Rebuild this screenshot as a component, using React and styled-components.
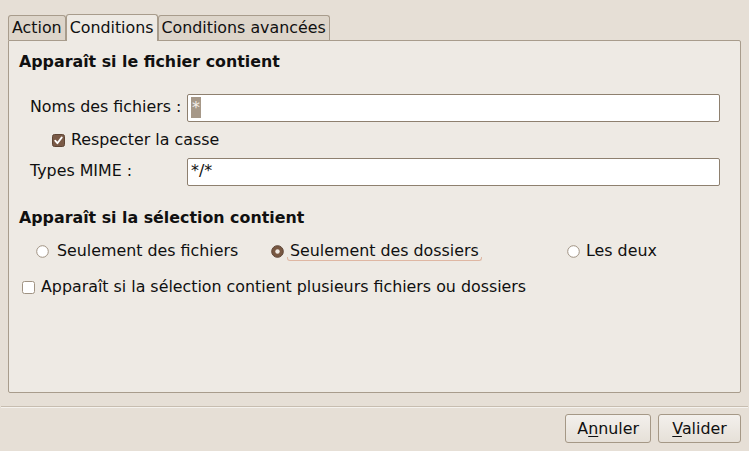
import React from 'react';
import styled, { createGlobalStyle } from 'styled-components';

const GlobalStyle = createGlobalStyle`
  body {
    margin: 0;
    background: #e6dfd6;
    font-family: 'DejaVu Sans', 'Liberation Sans', sans-serif;
    font-size: 15.85px;
    line-height: 20px;
    color: #101010;
  }
`;

const Root = styled.div`
  height: 451px;
  display: flex;
  flex-direction: column;
  overflow: hidden;
`;

const Notebook = styled.div`
  flex: 1;
  display: flex;
  flex-direction: column;
  margin: 14px 8px 0 8px;
`;

const TabBar = styled.div`
  display: flex;
  align-items: flex-end;
  height: 26px;
`;

const Tab = styled.div`
  position: relative;
  z-index: ${({ active }) => (active ? 2 : 1)};
  box-sizing: border-box;
  height: ${({ active }) => (active ? 27 : 25)}px;
  margin-bottom: ${({ active }) => (active ? -1 : 0)}px;
  padding: 0 3px ${({ active }) => (active ? 1 : 0)}px;
  display: flex;
  align-items: center;
  border: 1px solid #a89c8c;
  border-bottom: none;
  border-radius: 3px 3px 0 0;
  background: ${({ active }) => (active ? '#eeeae4' : '#ddd5ca')};
  white-space: nowrap;
`;

const Panel = styled.div`
  flex: 1;
  border: 1px solid #a89c8c;
  border-radius: 0 2px 2px 2px;
  background: #eeeae4;
  padding: 11px 20px 0 10px;
`;

const Heading = styled.div`
  font-weight: bold;
  margin-top: ${({ gap }) => gap || 0}px;
`;

const FieldGrid = styled.div`
  display: grid;
  grid-template-columns: 157px 1fr;
  align-items: center;
  margin: 22px 0 0 11px;
`;

const Label = styled.div`
  padding-bottom: 2px;
  white-space: nowrap;
`;

const Entry = styled.div`
  box-sizing: border-box;
  height: 28px;
  margin-top: ${({ gap }) => gap || 0}px;
  display: flex;
  align-items: center;
  padding: 0 4px 2px 3px;
  border: 1px solid #8e806f;
  border-radius: 2px;
  background: #ffffff;
  white-space: pre;
`;

const Selection = styled.span`
  display: inline-block;
  height: 21px;
  line-height: 21px;
  padding: 0 1px;
  background: #a69888;
  color: #f4f0ea;
`;

const Option = styled.label`
  display: flex;
  align-items: center;
  gap: ${({ spacing }) => spacing || 7}px;
  width: ${({ width }) => (width ? `${width}px` : 'auto')};
  margin: ${({ gap }) => gap || 0}px 0 0 ${({ indent }) => indent || 0}px;
  grid-column: ${({ span }) => (span ? '1 / -1' : 'auto')};
  height: 20px;
  white-space: nowrap;

  svg {
    flex: none;
  }
`;

const RadioRow = styled.div`
  display: flex;
  margin: 13px 0 0 17px;
`;

const Focused = styled.span`
  position: relative;

  &::after {
    content: '';
    position: absolute;
    left: -3px;
    right: -3px;
    bottom: 0;
    height: 3px;
    border: 1px solid #dfb7a3;
    border-top: none;
    border-radius: 0 0 3px 3px;
  }
`;

const Separator = styled.div`
  margin: 13px 1px 0;
  height: 0;
  border-top: 1px solid #c7bdb0;
  border-bottom: 1px solid #f5f2ee;
`;

const ButtonBar = styled.div`
  display: flex;
  justify-content: flex-end;
  gap: 7px;
  padding: 6px 8px 8px;
`;

const Button = styled.button`
  box-sizing: border-box;
  height: 29px;
  min-width: 83px;
  padding: 0 11px;
  font: inherit;
  color: #101010;
  border: 1px solid #a59886;
  border-radius: 3px;
  background: linear-gradient(#f3f0ec, #e6e0d8);

  u {
    text-decoration-thickness: 1px;
    text-underline-offset: 2px;
  }
`;

const CheckBox = ({ checked }) => (
  <svg width="13" height="13" viewBox="0 0 13 13">
    <rect
      x="0.5"
      y="0.5"
      width="12"
      height="12"
      rx="2"
      fill={checked ? '#7a5a46' : '#ffffff'}
      stroke={checked ? '#5e4534' : '#a09383'}
    />
    {checked && (
      <path
        d="M3.2 6.6 L5.4 9.2 L9.8 3.4"
        fill="none"
        stroke="#ffffff"
        strokeWidth="1.8"
        strokeLinecap="round"
        strokeLinejoin="round"
      />
    )}
  </svg>
);

const Radio = ({ checked }) => (
  <svg width="13" height="13" viewBox="0 0 13 13">
    <circle
      cx="6.5"
      cy="6.5"
      r="5.8"
      fill={checked ? '#785842' : '#ffffff'}
      stroke={checked ? '#5c4333' : '#a09383'}
    />
    {checked && <circle cx="6.5" cy="6.5" r="2.2" fill="#f1ebe4" />}
  </svg>
);

export default function App() {
  return (
    <Root>
      <GlobalStyle />
      <Notebook>
        <TabBar>
          <Tab>Action</Tab>
          <Tab active>Conditions</Tab>
          <Tab>Conditions avancées</Tab>
        </TabBar>
        <Panel>
          <Heading>Apparaît si le fichier contient</Heading>
          <FieldGrid>
            <Label>Noms des fichiers :</Label>
            <Entry>
              <Selection>*</Selection>
            </Entry>
            <Option span indent={22} gap={8} spacing={6}>
              <CheckBox checked />
              Respecter la casse
            </Option>
            <Label style={{ marginTop: 8 }}>Types MIME :</Label>
            <Entry gap={8}>*/*</Entry>
          </FieldGrid>
          <Heading gap={22}>Apparaît si la sélection contient</Heading>
          <RadioRow>
            <Option width={235} spacing={8}>
              <Radio />
              Seulement des fichiers
            </Option>
            <Option width={296} spacing={6}>
              <Radio checked />
              <Focused>Seulement des dossiers</Focused>
            </Option>
            <Option spacing={6}>
              <Radio />
              Les deux
            </Option>
          </RadioRow>
          <Option indent={3} gap={16} spacing={6}>
            <CheckBox />
            Apparaît si la sélection contient plusieurs fichiers ou dossiers
          </Option>
        </Panel>
      </Notebook>
      <Separator />
      <ButtonBar>
        <Button>
          A<u>n</u>nuler
        </Button>
        <Button>
          <u>V</u>alider
        </Button>
      </ButtonBar>
    </Root>
  );
}
